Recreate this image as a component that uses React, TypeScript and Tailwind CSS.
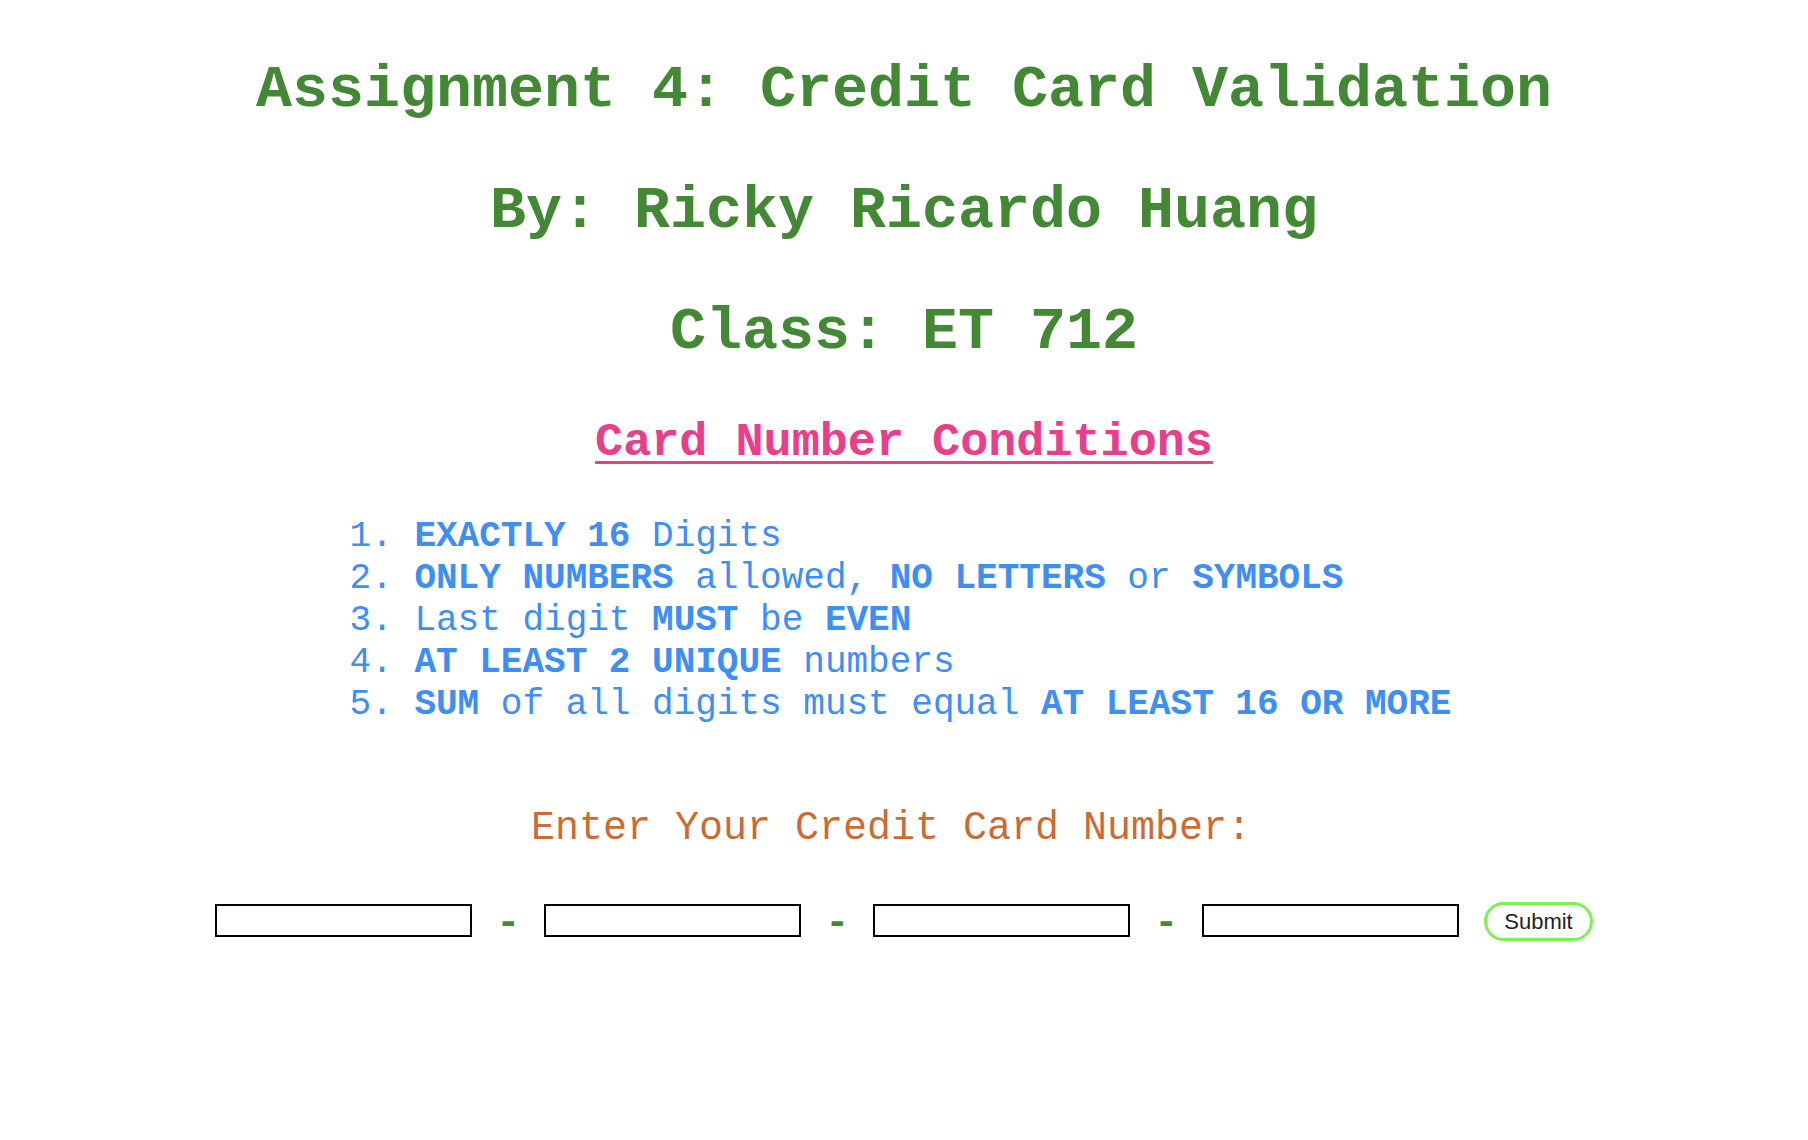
const mono = "font-['Liberation_Mono','Courier_New',monospace]";

function Title({ children }: { children: React.ReactNode }) {
	return (
		<h1 className="text-[60px] leading-[68px] font-bold text-[#438834] mb-[53px]">{children}</h1>
	);
}

const rules: { parts: [string, boolean][] }[] = [
	{ parts: [["EXACTLY 16", true], [" Digits", false]] },
	{
		parts: [
			["ONLY NUMBERS", true],
			[" allowed, ", false],
			["NO LETTERS", true],
			[" or ", false],
			["SYMBOLS", true],
		],
	},
	{ parts: [["Last digit ", false], ["MUST", true], [" be ", false], ["EVEN", true]] },
	{ parts: [["AT LEAST 2 UNIQUE", true], [" numbers", false]] },
	{
		parts: [
			["SUM", true],
			[" of all digits must equal ", false],
			["AT LEAST 16 OR MORE", true],
		],
	},
];

function CardInput() {
	return <input type="text" className="w-[257px] h-[33px] mt-[2px] border-2 border-black bg-white" />;
}

function Dash() {
	return (
		<span className="w-[72px] text-center text-[40px] leading-[33px] font-bold text-[#438834] mt-[5px]">
			-
		</span>
	);
}

export default function App() {
	return (
		<div className={`min-h-[1140px] bg-white text-center ${mono} pt-[56px]`}>
			<Title>Assignment 4: Credit Card Validation</Title>
			<Title>By: Ricky Ricardo Huang</Title>
			<h1 className="text-[60px] leading-[68px] font-bold text-[#438834]">Class: ET 712</h1>

			<h2 className="mt-[50px] text-[46.8px] leading-[53px] font-bold text-[#ea3e8c] underline decoration-[3px] underline-offset-[6px]">
				Card Number Conditions
			</h2>

			<div className="mt-[47px] mr-[7px] inline-block text-left text-[36px] leading-[42px] text-[#3d8ef5]">
				{rules.map((rule, i) => (
					<div key={i} className="whitespace-pre">
						{`${i + 1}. `}
						{rule.parts.map(([text, bold], j) =>
							bold ? (
								<b key={j} className="font-bold">
									{text}
								</b>
							) : (
								<span key={j}>{text}</span>
							),
						)}
					</div>
				))}
			</div>

			<p className="mt-[80px] pr-[26px] text-[40px] leading-[45px] text-[#cb6b34]">Enter Your Credit Card Number:</p>

			<div className="mt-[51px] flex justify-center items-start">
				<CardInput />
				<Dash />
				<CardInput />
				<Dash />
				<CardInput />
				<Dash />
				<CardInput />
				<button
					type="button"
					className="ml-[25px] h-[39px] px-[17px] rounded-full border-[3px] border-[#7cf152] bg-white text-[22px] leading-none text-[#222] font-['Liberation_Sans',Arial,sans-serif]"
				>
					Submit
				</button>
			</div>
		</div>
	);
}
